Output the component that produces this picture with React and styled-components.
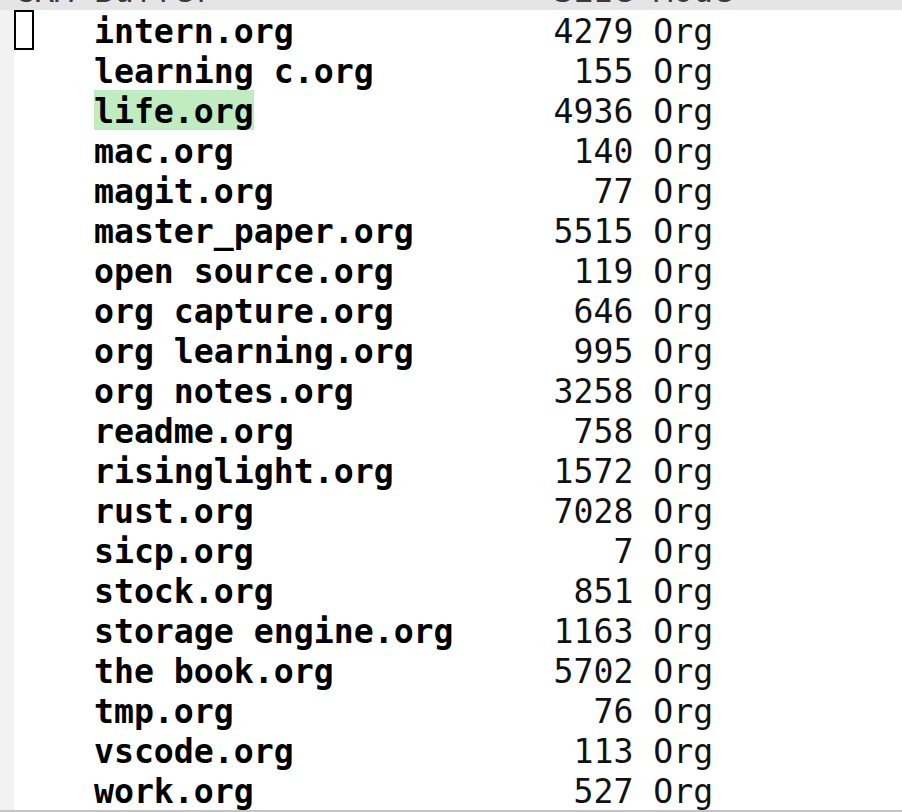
import React from "react";
import styled, { createGlobalStyle } from "styled-components";

const Global = createGlobalStyle`
  html, body { margin: 0; padding: 0; background: #ffffff; }
  body { font-family: "DejaVu Sans Mono", "Liberation Mono", monospace; }
`;

const rows = [
  ["intern.org", 4279],
  ["learning c.org", 155],
  ["life.org", 4936],
  ["mac.org", 140],
  ["magit.org", 77],
  ["master_paper.org", 5515],
  ["open source.org", 119],
  ["org capture.org", 646],
  ["org learning.org", 995],
  ["org notes.org", 3258],
  ["readme.org", 758],
  ["risinglight.org", 1572],
  ["rust.org", 7028],
  ["sicp.org", 7],
  ["stock.org", 851],
  ["storage engine.org", 1163],
  ["the book.org", 5702],
  ["tmp.org", 76],
  ["vscode.org", 113],
  ["work.org", 527],
];

const Frame = styled.div`
  width: 902px;
  height: 812px;
  display: flex;
  flex-direction: column;
  overflow: hidden;
  font-family: "DejaVu Sans Mono", "Liberation Mono", monospace;
  font-size: 33.2px;
`;

const HeaderLine = styled.div`
  height: 10px;
  flex: none;
  background: #e5e5e5;
  overflow: hidden;
  padding-left: 14px;
`;

const Body = styled.div`
  flex: 1;
  display: flex;
  min-height: 0;
`;

const Fringe = styled.div`
  width: 14px;
  flex: none;
  background: #f2f2f2;
`;

const List = styled.div`
  flex: 1;
  display: flex;
  flex-direction: column;
`;

const Row = styled.div`
  display: grid;
  grid-template-columns: 4ch 21ch 6ch 1ch 3ch;
  grid-template-rows: 40px;
  height: 40px;
  line-height: 44px;
  color: ${(p) => (p.$header ? "#3a3a3a" : "#111111")};
  margin-top: ${(p) => (p.$header ? "-31px" : "0")};
  white-space: pre;
`;

const Mark = styled.div`
  display: block;
`;

const Cursor = styled.span`
  display: block;
  box-sizing: border-box;
  width: 20px;
  height: 40px;
  border: 2px solid #000;
`;

const Name = styled.div`
  font-weight: ${(p) => (p.$header ? "normal" : "bold")};
  color: ${(p) => (p.$header ? "#3a3a3a" : "#000")};
`;

const NameText = styled.span`
  display: inline-block;
  height: 40px;
  vertical-align: top;
  background: ${(p) => (p.$hl ? "#c1ecc1" : "transparent")};
`;

const Size = styled.div`
  text-align: right;
`;

const Mode = styled.div`
  grid-column: 5;
`;

const ModeLineEdge = styled.div`
  height: 2px;
  flex: none;
  background: #c4c4c4;
`;

export default function App() {
  return (
    <>
      <Global />
      <Frame>
        <HeaderLine>
          <Row $header>
            <Mark>CRM</Mark>
            <Name $header>Buffer</Name>
            <Size>Size</Size>
            <Mode>Mode</Mode>
          </Row>
        </HeaderLine>
        <Body>
          <Fringe />
          <List>
            {rows.map(([name, size], i) => (
              <Row key={name}>
                <Mark>{i === 0 ? <Cursor /> : null}</Mark>
                <Name>
                  <NameText $hl={name === "life.org"}>{name}</NameText>
                </Name>
                <Size>{size}</Size>
                <Mode>Org</Mode>
              </Row>
            ))}
          </List>
        </Body>
        <ModeLineEdge />
      </Frame>
    </>
  );
}
